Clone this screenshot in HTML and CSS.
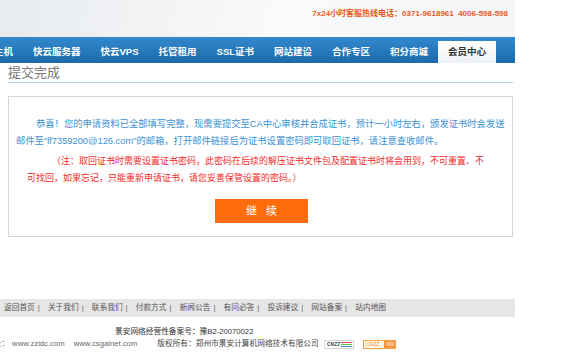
FILE: index.html
```html
<!DOCTYPE html>
<html lang="zh-CN">
<head>
  <meta charset="UTF-8">
  <meta name="viewport" content="width=device-width, initial-scale=1.0">
  <title>提交完成</title>
  <link rel="stylesheet" href="styles.css">
</head>
<body>
  <div class="page">
    <header class="top">
      <p class="hotline">7x24小时客服热线电话：0371-9618961&nbsp;&nbsp;4006-598-598</p>
    </header>

    <nav class="nav">
      <ul>
        <li><a href="#">主机</a></li>
        <li><a href="#">快云服务器</a></li>
        <li><a href="#">快云VPS</a></li>
        <li><a href="#">托管租用</a></li>
        <li><a href="#">SSL证书</a></li>
        <li><a href="#">网站建设</a></li>
        <li><a href="#">合作专区</a></li>
        <li><a href="#">积分商城</a></li>
        <li class="on"><a href="#">会员中心</a></li>
      </ul>
    </nav>

    <main class="main">
      <h1 class="title">提交完成</h1>

      <div class="notice">
        <p class="msg">恭喜！您的申请资料已全部填写完整，现需要提交至CA中心审核并合成证书，预计一小时左右，颁发证书时会发送邮件至"lf7359200@126.com"的邮箱，打开邮件链接后为证书设置密码即可取回证书，请注意查收邮件。</p>
        <p class="warn">（注：取回证书时需要设置证书密码，此密码在后续的解压证书文件包及配置证书时将会用到，不可重置、不可找回，如果忘记，只能重新申请证书，请您妥善保管设置的密码。）</p>
        <div class="actions">
          <a class="btn" href="#">继 续</a>
        </div>
      </div>
    </main>

    <footer class="foot">
      <div class="foot-links">
        <a href="#">返回首页</a><span class="sep">|</span>
        <a href="#">关于我们</a><span class="sep">|</span>
        <a href="#">联系我们</a><span class="sep">|</span>
        <a href="#">付款方式</a><span class="sep">|</span>
        <a href="#">新闻公告</a><span class="sep">|</span>
        <a href="#">有问必答</a><span class="sep">|</span>
        <a href="#">投诉建议</a><span class="sep">|</span>
        <a href="#">网站备案</a><span class="sep">|</span>
        <a href="#">站内地图</a>
      </div>
      <p class="icp">景安网络经营性备案号：豫B2-20070022</p>
      <p class="copy">
        <span class="site">网址：</span><span class="url">www.zzidc.com</span><span class="url url2">www.csgainet.com</span><span class="owner">版权所有：郑州市景安计算机网络技术有限公司</span>
        <svg class="cnzz" width="30" height="9" viewBox="0 0 30 9">
          <rect x="0.5" y="0.5" width="29" height="8" fill="#fff" stroke="#d6d6d6"/>
          <text x="3" y="6.4" font-size="5" font-weight="bold" font-family="Liberation Sans, sans-serif" fill="#444">CNZZ</text>
          <line x1="17" y1="2.5" x2="28" y2="2.5" stroke="#e84c4c"/>
          <line x1="17" y1="4.5" x2="28" y2="4.5" stroke="#5bbf4a"/>
          <line x1="17" y1="6.5" x2="28" y2="6.5" stroke="#4a7fd9"/>
        </svg>
        <svg class="cnzz cnzz2" width="33" height="9" viewBox="0 0 33 9">
          <rect x="0.5" y="0.5" width="32" height="8" fill="#fff6ea" stroke="#f4a24a"/>
          <text x="3" y="6.4" font-size="5" font-family="Liberation Sans, sans-serif" fill="#f08a2a">CNZZ</text>
          <rect x="21" y="1" width="11" height="7" fill="#f7923a"/>
          <line x1="23" y1="3" x2="31" y2="3" stroke="#fff" stroke-width="0.8"/>
          <line x1="23" y1="5" x2="31" y2="5" stroke="#fff" stroke-width="0.8"/>
        </svg>
      </p>
    </footer>
  </div>
</body>
</html>
```

FILE: styles.css
```css
html, body {
  margin: 0;
  padding: 0;
}

body {
  background: #fff;
  font-family: "Liberation Sans", "Noto Sans CJK SC", sans-serif;
  color: #333;
}

.page {
  width: 515px;
  overflow: hidden;
}

/* шапка */
.top {
  height: 37px;
  box-sizing: border-box;
  padding: 9px 7px 0 0;
  background: linear-gradient(100deg, #e8ebee, #f9fafb 55%, #f3f5f7);
}

.hotline {
  margin: 0;
  text-align: right;
  font-size: 8px;
  line-height: 10px;
  font-weight: bold;
  color: #e85a1b;
}

.nav {
  height: 26px;
  background: linear-gradient(#3389cd, #1b6aab);
}

.nav ul {
  list-style: none;
  margin: 0 0 0 -16px;
  padding: 0;
  height: 100%;
  display: flex;
  align-items: flex-end;
}

.nav a {
  display: block;
  height: 22px;
  line-height: 22px;
  padding: 0 10px;
  font-size: 9.5px;
  font-weight: bold;
  color: #fff;
  text-decoration: none;
  white-space: nowrap;
}

.nav .on a {
  background: linear-gradient(#fff, #eef1f4);
  color: #333;
}

/* контент */
.main {
  padding: 0 2px 0 8px;
}

.title {
  margin: 0;
  padding: 2px 0 1px;
  font-size: 13px;
  line-height: 16px;
  font-weight: normal;
  color: #777;
  border-bottom: 1px solid #a9cfe3;
}

.notice {
  margin-top: 13px;
  border: 1px solid #d5d5d5;
  padding: 19px 0 13px;
}

.msg {
  margin: 0;
  padding: 0 4px 0 7px;
  text-indent: 20px;
  font-size: 9.3px;
  line-height: 17px;
  color: #3a91d6;
}

.warn {
  margin: 3px 0 0;
  padding: 0 22px 0 18px;
  text-indent: 25px;
  font-size: 9px;
  line-height: 17px;
  color: #f32a2a;
}

.actions {
  margin-top: 12px;
  padding-left: 2px;
  text-align: center;
}

.btn {
  display: inline-block;
  width: 93px;
  height: 24px;
  line-height: 24px;
  background: #ff6c0c;
  color: #fff;
  font-size: 11px;
  letter-spacing: 3px;
  text-indent: 3px;
  text-decoration: none;
}

/* подвал */
.foot {
  margin-top: 62px;
  font-size: 7.7px;
}

.foot-links {
  height: 18px;
  line-height: 18px;
  padding-left: 4px;
  background: #e6e6e6;
  color: #666;
  white-space: nowrap;
}

.foot-links a {
  color: #555;
  text-decoration: none;
}

.foot-links .sep {
  margin: 0 6px 0 3px;
}

.icp {
  margin: 9px 0 0;
  padding-left: 115px;
  line-height: 12px;
  color: #333;
}

.copy {
  margin: 0;
  line-height: 12px;
  white-space: nowrap;
  color: #666;
  display: flex;
  align-items: center;
}

.site {
  margin-left: -14px;
  margin-right: 3px;
}

.url2 {
  margin-left: 9px;
}

.owner {
  margin-left: 20px;
  color: #444;
}

.cnzz {
  margin-left: 5px;
}

.cnzz2 {
  margin-left: 9px;
}
```
